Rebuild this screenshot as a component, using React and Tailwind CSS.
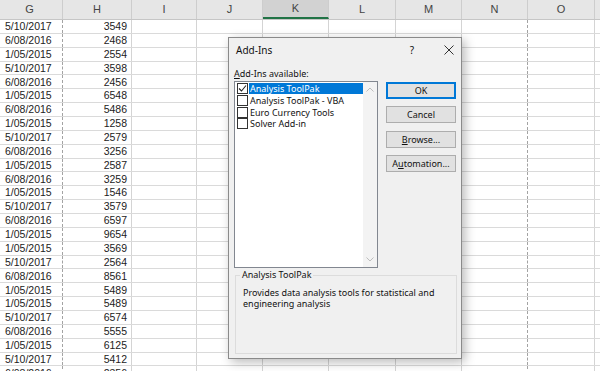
import React from "react";

const COLUMNS = [
  { key: "G", width: "w-[66px]", line: "border-dashed border-[#a3a3a3]" },
  { key: "H", width: "w-[69px]", line: "border-[#d4d4d4]" },
  { key: "I", width: "w-[65px]", line: "border-[#d4d4d4]" },
  { key: "J", width: "w-[66px]", line: "border-[#d4d4d4]" },
  { key: "K", width: "w-[66px]", line: "border-[#d4d4d4]" },
  { key: "L", width: "w-[67px]", line: "border-[#d4d4d4]" },
  { key: "M", width: "w-[66px]", line: "border-[#d4d4d4]" },
  { key: "N", width: "w-[66px]", line: "border-dashed border-[#a3a3a3]" },
  { key: "O", width: "w-[67px]", line: "border-[#d4d4d4]" },
  { key: "P", width: "w-[40px]", line: "border-[#d4d4d4]", hidden: true },
];

const ROWS = [
  ["5/10/2017", "3549"],
  ["6/08/2016", "2468"],
  ["1/05/2015", "2554"],
  ["5/10/2017", "3598"],
  ["6/08/2016", "2456"],
  ["1/05/2015", "6548"],
  ["6/08/2016", "5486"],
  ["1/05/2015", "1258"],
  ["5/10/2017", "2579"],
  ["6/08/2016", "3256"],
  ["1/05/2015", "2587"],
  ["6/08/2016", "3259"],
  ["1/05/2015", "1546"],
  ["5/10/2017", "3579"],
  ["6/08/2016", "6597"],
  ["1/05/2015", "9654"],
  ["1/05/2015", "3569"],
  ["5/10/2017", "2564"],
  ["6/08/2016", "8561"],
  ["1/05/2015", "5489"],
  ["1/05/2015", "5489"],
  ["5/10/2017", "6574"],
  ["6/08/2016", "5555"],
  ["1/05/2015", "6125"],
  ["5/10/2017", "5412"],
  ["6/08/2016", "2356"],
];

const ADDINS = [
  { label: "Analysis ToolPak", checked: true, selected: true },
  { label: "Analysis ToolPak - VBA" },
  { label: "Euro Currency Tools" },
  { label: "Solver Add-in" },
];

function HeaderRow() {
  return (
    <div className="flex h-[20px] ml-[-3px] bg-[#e6e6e6] border-b border-[#c6c6c6]">
      {COLUMNS.map((col) => (
        <div
          key={col.key}
          className={`${col.width} shrink-0 flex items-center justify-center border-r border-[#cdcdcd] text-[11px] text-[#444] ${
            col.key === "K" ? "bg-[#d2d2d2] border-b-2 border-b-[#217346]" : ""
          }`}
        >
          {col.hidden ? null : col.key}
        </div>
      ))}
    </div>
  );
}

function DataRow({ date, value }) {
  return (
    <div className="flex h-[13.87px] ml-[-3px] border-b border-[#dadada] bg-white">
      {COLUMNS.map((col) => (
        <div
          key={col.key}
          className={`${col.width} shrink-0 flex items-center border-r ${col.line} text-[10.5px] leading-none text-[#222] ${
            col.key === "H" ? "justify-end pr-[4px]" : "pl-[8px]"
          }`}
        >
          {col.key === "G" ? date : col.key === "H" ? value : null}
        </div>
      ))}
    </div>
  );
}

function Checkbox({ checked }) {
  return (
    <span className="w-[11px] h-[11px] shrink-0 border border-[#333] bg-white flex items-center justify-center">
      {checked && (
        <svg width="9" height="9" viewBox="0 0 9 9">
          <polyline points="1,4.5 3.5,7 8,1.5" fill="none" stroke="#222" strokeWidth="1.1" />
        </svg>
      )}
    </span>
  );
}

function DialogButton({ children, primary }) {
  return (
    <div
      className={`h-[17px] w-[70px] flex items-center justify-center bg-[#e1e1e1] text-[9px] text-[#111] border ${
        primary ? "border-[#0078d7] shadow-[inset_0_0_0_1px_#0078d7]" : "border-[#adadad]"
      }`}
    >
      {children}
    </div>
  );
}

function AddInsDialog() {
  return (
    <div className="absolute left-[228px] top-[37px] w-[234px] h-[322px] bg-[#f0f0f0] border border-[#8a8a8a] shadow-[3px_3px_10px_rgba(0,0,0,0.28)] font-['Noto_Sans',sans-serif] text-[#111] flex flex-col">
      <div className="h-[24px] flex items-center pl-[7px] text-[10px]">
        <span className="flex-1">Add-Ins</span>
        <span className="w-[14px] text-center text-[10px] mr-[23px]">?</span>
        <span className="w-[14px] flex justify-center mr-[5px]">
          <svg width="10" height="10" viewBox="0 0 10 10">
            <path d="M0.5 0.5 L9.5 9.5 M9.5 0.5 L0.5 9.5" stroke="#333" strokeWidth="1" />
          </svg>
        </span>
      </div>

      <div className="px-[5px] pt-[6px]">
        <div className="h-[12px] leading-[12px] text-[9px]">
          <span className="underline">A</span>dd-Ins available:
        </div>

        <div className="flex mt-[1px]">
          <div className="w-[145px] h-[187px] bg-white border border-[#828790] flex">
            <div className="flex-1 pt-[1px] text-[9px]">
              {ADDINS.map((item) => (
                <div key={item.label} className="h-[11.7px] flex items-center pl-[2px] gap-[1px]">
                  <Checkbox checked={item.checked} />
                  <span
                    className={`flex-1 h-[11px] leading-[11px] pl-[1px] ${
                      item.selected ? "bg-[#0078d7] text-white" : ""
                    }`}
                  >
                    {item.label}
                  </span>
                </div>
              ))}
            </div>
            <div className="w-[14px] bg-[#f3f3f3] flex flex-col items-center justify-between py-[5px]">
              <svg width="8" height="5" viewBox="0 0 8 5">
                <polyline points="0.5,4.5 4,1 7.5,4.5" fill="none" stroke="#bdbdbd" strokeWidth="1" />
              </svg>
              <svg width="8" height="5" viewBox="0 0 8 5">
                <polyline points="0.5,0.5 4,4 7.5,0.5" fill="none" stroke="#bdbdbd" strokeWidth="1" />
              </svg>
            </div>
          </div>

          <div className="ml-[8px] pt-[1px] flex flex-col">
            <DialogButton primary>OK</DialogButton>
            <div className="mt-[7px]">
              <DialogButton>Cancel</DialogButton>
            </div>
            <div className="mt-[8px]">
              <DialogButton>
                <span className="underline">B</span>rowse...
              </DialogButton>
            </div>
            <div className="mt-[7px]">
              <DialogButton>
                A<span className="underline">u</span>tomation...
              </DialogButton>
            </div>
          </div>
        </div>

        <fieldset className="ml-[1px] mt-[1px] w-[222px] h-[85px] border border-[#dcdcdc] px-[6px] text-[9px]">
          <legend className="ml-[-2px] px-[2px] h-[12px] leading-[12px]">Analysis ToolPak</legend>
          <p className="pt-[7px] leading-[10.5px] pl-[1px]">
            Provides data analysis tools for statistical and engineering analysis
          </p>
        </fieldset>
      </div>
    </div>
  );
}

export default function App() {
  return (
    <div className="relative w-[600px] h-[371px] overflow-hidden bg-white font-['Liberation_Sans',Arial,sans-serif]">
      <HeaderRow />
      {ROWS.map(([date, value], i) => (
        <DataRow key={i} date={date} value={value} />
      ))}
      <AddInsDialog />
    </div>
  );
}
